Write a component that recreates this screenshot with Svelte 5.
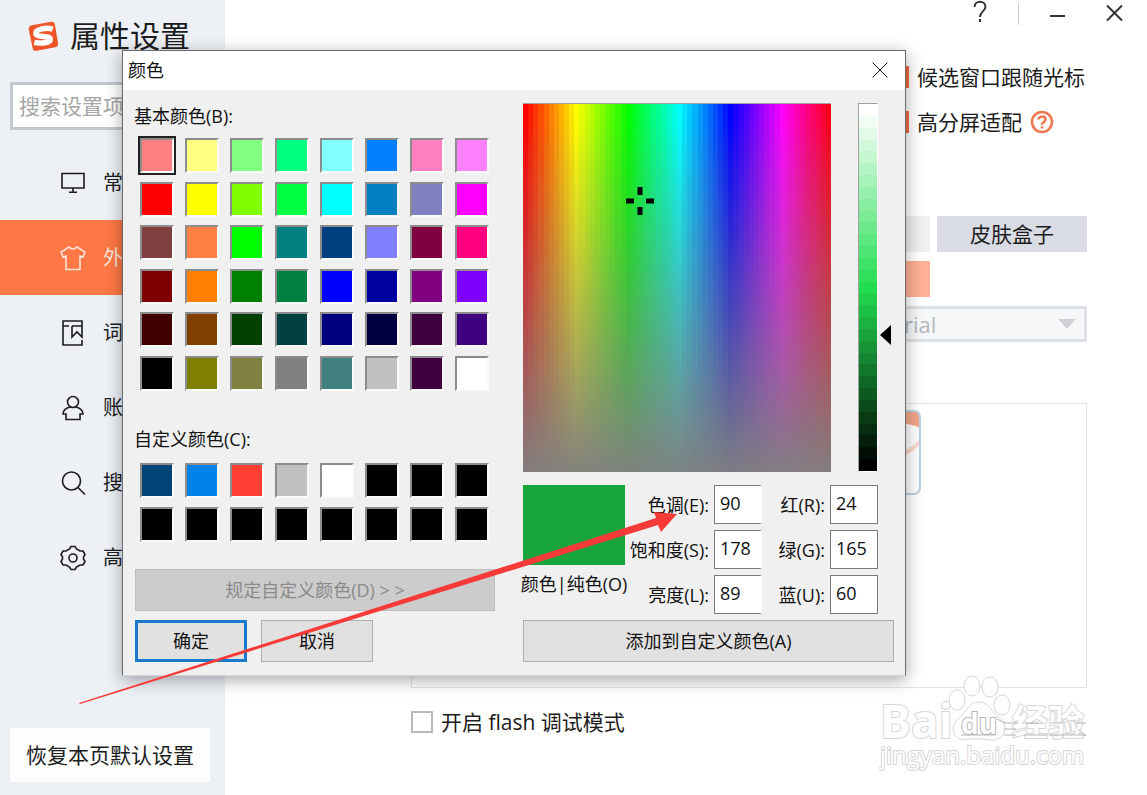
<script lang="ts">
	const navItems = ['常', '外', '词', '账', '搜', '高']
	const icons = ['screen', 'shirt', 'book', 'user', 'search', 'gear']
	let active = $state(1)

	const basicColors = [
		'#ff8080', '#ffff80', '#80ff80', '#00ff80', '#80ffff', '#0080ff', '#ff80c0', '#ff80ff',
		'#ff0000', '#ffff00', '#80ff00', '#00ff40', '#00ffff', '#0080c0', '#8080c0', '#ff00ff',
		'#804040', '#ff8040', '#00ff00', '#008080', '#004080', '#8080ff', '#800040', '#ff0080',
		'#800000', '#ff8000', '#008000', '#008040', '#0000ff', '#0000a0', '#800080', '#8000ff',
		'#400000', '#804000', '#004000', '#004040', '#000080', '#000040', '#400040', '#400080',
		'#000000', '#808000', '#808040', '#808080', '#408080', '#c0c0c0', '#400040', '#ffffff'
	]
	const customColors = [
		'#004478', '#0083e8', '#ff3e33', '#c0c0c0', '#ffffff', '#000000', '#000000', '#000000',
		'#000000', '#000000', '#000000', '#000000', '#000000', '#000000', '#000000', '#000000'
	]
	let selected = $state(0)

	let values = $state({ hue: '90', sat: '178', lum: '89', red: '24', green: '165', blue: '60' })
	const fields = [
		{ key: 'hue', label: '色调(E):' },
		{ key: 'red', label: '红(R):' },
		{ key: 'sat', label: '饱和度(S):' },
		{ key: 'green', label: '绿(G):' },
		{ key: 'lum', label: '亮度(L):' },
		{ key: 'blue', label: '蓝(U):' }
	] as const

	let followCursor = $state(true)
	let highDpi = $state(true)
	let flashDebug = $state(false)

	// Gradient made of flat bands, like the native color dialog
	function bands(direction: string, count: number, color: (t: number) => string): string {
		const stops = []
		for (let i = 0; i < count; i++) {
			const from = (i / count) * 100
			const to = ((i + 1) / count) * 100
			stops.push(`${color(i / (count - 1))} ${from}% ${to}%`)
		}
		return `linear-gradient(${direction}, ${stops.join(', ')})`
	}

	const hueBands = bands('to right', 60, (t) => `hsl(${t * 354}, 100%, 50%)`)
	const grayBands = bands('to bottom', 62, (t) => `rgba(128, 128, 128, ${t * 0.97})`)
	const lumBands = bands('to bottom', 31, (t) => `hsl(135, 74%, ${(1 - t) * 100}%)`)
</script>

{#snippet swatch(color: string, label: string, isSelected: boolean, pick: () => void)}
	<button
		type="button"
		class="swatch"
		class:selected={isSelected}
		style="background-color: {color}"
		aria-label={label}
		onclick={pick}
	></button>
{/snippet}

<div class="page">
	<aside class="sidebar">
		<header class="brand">
			<svg class="logo" viewBox="0 0 32 32" aria-hidden="true">
				<path d="M4 4.500 L24 .8 Q27 .4 27.700 3.200 L31 23 Q31.500 26.500 28 27.200 L9 30.800 Q5.500 31.300 4.800 28 L.8 9 Q.3 5.400 4 4.500Z" fill="#ee5628" />
				<path d="M25.500 8.500 C20 6.500 7.500 8 8 13 C8.500 17.500 23 14.500 23 18.800 C23 22.800 13 23.500 6.500 22" fill="none" stroke="#fff" stroke-width="5.600" />
			</svg>
			<h1>属性设置</h1>
		</header>
		<input class="search" type="text" placeholder="搜索设置项" aria-label="搜索设置项" />
		<nav>
			{#each navItems as item, index}
				<button type="button" class="nav-item" class:active={active === index} onclick={() => (active = index)}>
					<svg viewBox="0 0 26 26" fill="none" stroke="currentColor" stroke-width="1.600" aria-hidden="true">
						{#if icons[index] === 'screen'}
							<path d="M2 3.500H24V18H2ZM13 18V22M9 22.200H17" />
						{:else if icons[index] === 'shirt'}
							<path d="M9 2 L1 7 L3 12 L6 11 V24.500 H20 V11 L23 12 L25 7 L17 2 Q13 6 9 2Z" />
						{:else if icons[index] === 'book'}
							<path d="M22 6V1H3V25H22V20M3 6H9M12 6H22V17L17 12L12 17V6" />
						{:else if icons[index] === 'user'}
							<circle cx="13" cy="7" r="5.500" />
							<path d="M10 12 Q3 14 3 19 H6 V24.500 H20 V19 H23 Q23 14 16 12" />
						{:else if icons[index] === 'search'}
							<circle cx="11.500" cy="11" r="9" />
							<path d="M18 17.500 L25 24.500" />
						{:else}
							<path d="M11 1.500 H15 L16.500 4 L20 6 L23 6 L25 9.500 L23.500 12 V14 L25 16.500 L23 20 L20 20 L16.500 22 L15 24.500 H11 L9.500 22 L6 20 L3 20 L1 16.500 L2.500 14 V12 L1 9.500 L3 6 L6 6 L9.500 4Z" />
							<circle cx="13" cy="13" r="4" />
						{/if}
					</svg>
					<span>{item}</span>
				</button>
			{/each}
		</nav>
		<button type="button" class="restore">恢复本页默认设置</button>
	</aside>

	<main>
		<div class="window-bar">
			<button type="button" aria-label="帮助">
				<svg viewBox="0 0 20 24"><path d="M4.500 7 C4.500 0 15.500 0 15.500 7 C15.500 11 10 11.500 10 17" /><path d="M10 19V22" /></svg>
			</button>
			<span class="divider"></span>
			<button type="button" aria-label="最小化">
				<svg viewBox="0 0 20 24"><path d="M3 16H18" /></svg>
			</button>
			<button type="button" aria-label="关闭">
				<svg viewBox="0 0 20 24"><path d="M3 5.500L18 20.500M18 5.500L3 20.500" /></svg>
			</button>
		</div>

		<div class="content">
			<div class="options">
				<label class="check">
					<input type="checkbox" bind:checked={followCursor} />
					<span>候选窗口跟随光标</span>
				</label>
				<label class="check">
					<input type="checkbox" bind:checked={highDpi} />
					<span>高分屏适配</span>
					<svg class="hint" viewBox="0 0 24 24" fill="none" stroke="#f07850" aria-hidden="true">
						<circle cx="12" cy="12" r="10" stroke-width="2.600" />
						<path d="M8.500 9.500 C8.500 5.500 15.500 5.500 15.500 9.500 C15.500 12 12 12 12 14.800M12 16.200V18.600" stroke-width="2.600" />
					</svg>
				</label>
			</div>

			<div class="skin-buttons">
				<button type="button" class="plain" aria-label="更换皮肤"></button>
				<button type="button">皮肤盒子</button>
			</div>
			<button type="button" class="font-color" aria-label="字体颜色"></button>
			<div class="select-wrap">
				<select aria-label="字体" disabled>
					<option>Arial</option>
				</select>
				<svg viewBox="0 0 18 10" aria-hidden="true"><path d="M0 0H18L9 10Z" fill="#cfd2d4" /></svg>
			</div>

			<div class="preview-panel">
				<svg class="thumb" viewBox="0 0 150 85" aria-hidden="true">
					<path d="M120 1H144Q149 1 149 6V18Q138 12 120 14Z" fill="#f5a78c" />
					<path d="M120 44Q138 42 149 29V35Q138 46 120 50Z" fill="#fbd9cd" />
					<rect x="1" y="1" width="148" height="83" rx="6" fill="none" stroke="#bdd1e3" stroke-width="2" />
				</svg>
			</div>

			<div class="footer">
				<label class="check">
					<input type="checkbox" bind:checked={flashDebug} />
					<span>开启 flash 调试模式</span>
				</label>
			</div>
		</div>
	</main>

	<svg class="watermark" viewBox="0 0 210 106" aria-label="Baidu 经验">
		<g fill="#fff" stroke="#d6d6d6" stroke-width="2">
			<text x="1" y="64" class="mark-big">Bai</text>
			<g stroke-width="1">
				<ellipse cx="78" cy="26" rx="8" ry="10" />
				<ellipse cx="93" cy="12" rx="8" ry="10" />
				<ellipse cx="111" cy="13" rx="8" ry="10" />
				<ellipse cx="123" cy="31" rx="8" ry="10" />
				<path d="M100 28 C110 28 112 38 121 44 C131 52 125 67 112 66 Q100 64 90 65 C75 69 70 54 78 46 C88 38 89 28 100 28Z" />
			</g>
			<text x="133" y="62" class="mark-cn">经验</text>
			<text x="82" y="60" class="mark-du" stroke="#b4b4b4">du</text>
			<text x="1" y="90" class="mark-url">jingyan.baidu.com</text>
		</g>
		<path d="M82 61H116M118 45L126 49M125 49H139M125 55H137M125 61H137M147 49H160M145 61H168M172 49H184M196 49H207M170 61H207M199 55L207 62" stroke="#b4b4b4" fill="none" />
	</svg>

	<div class="dialog" role="dialog" aria-labelledby="dialog-title">
		<div class="title-bar">
			<h2 id="dialog-title">颜色</h2>
			<button type="button" aria-label="关闭">
				<svg viewBox="0 0 16 16"><path d="M.5 .5L15.500 15.500M15.500 .5L.5 15.500" /></svg>
			</button>
		</div>
		<div class="dialog-body">
			<section class="palette">
				<h3>基本颜色(B):</h3>
				<div class="swatches basic">
					{#each basicColors as color, index}
						{@render swatch(color, `基本颜色 ${index + 1}`, selected === index, () => (selected = index))}
					{/each}
				</div>
				<h3 class="custom-title">自定义颜色(C):</h3>
				<div class="swatches">
					{#each customColors as color, index}
						{@render swatch(color, `自定义颜色 ${index + 1}`, selected === index + 48, () => (selected = index + 48))}
					{/each}
				</div>
				<button type="button" class="btn define" disabled>规定自定义颜色(D) &gt; &gt;</button>
				<div class="actions">
					<button type="button" class="btn primary">确定</button>
					<button type="button" class="btn">取消</button>
				</div>
			</section>

			<section class="mixer">
				<div class="pickers">
					<div class="spectrum" style="background-image: {grayBands}, {hueBands}">
						<svg class="crosshair" viewBox="0 0 28 28" aria-hidden="true">
							<path d="M14 0V8M14 20V28M0 14H8M20 14H28" stroke="#000" stroke-width="5" />
						</svg>
					</div>
					<div class="luminance" style="background-image: {lumBands}">
						<svg class="pointer" viewBox="0 0 11 20" aria-hidden="true"><path d="M0 10L11 0V20Z" /></svg>
					</div>
				</div>
				<div class="fields">
					<div class="solid">
						<div class="solid-color"></div>
						<span>颜色|纯色(O)</span>
					</div>
					{#each fields as field, index}
						<label for={field.key}>{field.label}</label>
						<input id={field.key} type="text" class:spin={index % 2 === 0} bind:value={values[field.key]} />
					{/each}
				</div>
				<button type="button" class="btn add">添加到自定义颜色(A)</button>
			</section>
		</div>
	</div>

	<svg class="arrow" viewBox="0 0 600 192" aria-hidden="true">
		<path d="M0 190L577 5L575 -1L598 1L582 19L579 12L1 191Z" fill="#f63a38" />
	</svg>
</div>

<style>
	:global(body) {
		margin: 0;
		background: #fff;
	}
	.page {
		position: relative;
		display: flex;
		min-height: 100vh;
		overflow: hidden;
		background: #fff;
		color: #1c1c1c;
		font-family: 'Open Sans', 'Noto Sans CJK SC', sans-serif;
		font-size: 21px;
		line-height: 22px;
	}
	.page * {
		box-sizing: border-box;
	}
	button,
	input,
	select {
		margin: 0;
		padding: 0;
		border: 0;
		border-radius: 0;
		background: none;
		color: inherit;
		font: inherit;
	}
	h1,
	h2,
	h3 {
		margin: 0;
		font-weight: 400;
	}
	.sidebar {
		display: flex;
		flex-direction: column;
		flex: none;
		width: 225px;
		background: #edf1f6;
	}
	.brand {
		display: flex;
		align-items: center;
		gap: 11px;
		height: 72px;
		padding-left: 28px;
	}
	.logo {
		width: 31px;
		height: 31px;
	}
	h1 {
		font-size: 30px;
		line-height: 36px;
	}
	.search {
		height: 48px;
		margin: 10px 10px 15px;
		padding: 0 6px;
		border: 3px solid #c3c8ce;
		background: #fff;
	}
	.search::placeholder {
		color: #a5a5a5;
	}
	.nav-item {
		display: flex;
		align-items: center;
		gap: 17px;
		width: 100%;
		height: 75px;
		padding-left: 60px;
		font-size: 20px;
	}
	.nav-item svg {
		width: 26px;
		height: 26px;
	}
	.nav-item.active {
		background: #ff7846;
		color: #ffe4d8;
	}
	.restore {
		height: 54px;
		margin: auto 15px 13px 10px;
		background: #fdfdfd;
	}
	main {
		flex: 1;
		padding-bottom: 24px;
	}
	.window-bar {
		display: flex;
		justify-content: flex-end;
		height: 28px;
		padding-right: 23px;
	}
	.window-bar svg {
		display: block;
		width: 20px;
		height: 24px;
		fill: none;
		stroke: #333;
		stroke-width: 2;
	}
	.window-bar button {
		height: 24px;
		margin-left: 37px;
	}
	.window-bar .divider {
		width: 1px;
		height: 22px;
		margin: 3px -9px 0 28px;
		background: #ccc;
	}
	.content {
		display: flex;
		flex-direction: column;
		align-items: flex-end;
		padding: 38px 60px 0 186px;
	}
	.options {
		display: flex;
		flex-direction: column;
		gap: 23px;
		width: 200px;
	}
	.check {
		display: flex;
		align-items: center;
		gap: 8px;
		white-space: nowrap;
	}
	.check input {
		appearance: none;
		flex: none;
		width: 22px;
		height: 22px;
		border: 2px solid #b5bac0;
		background: #fff;
	}
	.check input:checked {
		border-color: #f26b3f;
		background: #f26b3f;
	}
	.hint {
		width: 24px;
		height: 24px;
		margin: -1px 0;
	}
	.skin-buttons {
		display: flex;
		gap: 7px;
		margin-top: 83px;
	}
	.skin-buttons button {
		width: 150px;
		height: 36px;
		background: #d9dce4;
	}
	.skin-buttons .plain {
		background: #efefef;
	}
	.font-color {
		width: 150px;
		height: 36px;
		margin: 9px 157px 9px 0;
		background: #ffb096;
	}
	.select-wrap {
		position: relative;
		width: 216px;
	}
	.select-wrap svg {
		position: absolute;
		top: 13px;
		right: 11px;
		width: 18px;
		height: 10px;
	}
	select {
		appearance: none;
		display: block;
		width: 100%;
		height: 36px;
		padding-left: 16px;
		border: 3px solid #dfe2e4;
		background: #f5f7f9;
		color: #b4b8bb;
		font-size: 22px;
		opacity: 1;
	}
	.preview-panel {
		align-self: stretch;
		min-height: 285px;
		margin: 61px 0 23px;
		padding: 6px 0 0 359px;
		border: 1px solid #e1e4e7;
	}
	.thumb {
		width: 150px;
		height: 85px;
	}
	.footer {
		align-self: stretch;
	}
	.watermark {
		position: absolute;
		right: 58px;
		bottom: 15px;
		width: 210px;
		height: 106px;
	}
	.watermark text {
		font-family: 'Open Sans', 'Noto Sans CJK SC', sans-serif;
		font-weight: 700;
		paint-order: stroke;
	}
	.mark-big {
		font-size: 46px;
	}
	.mark-cn {
		font-size: 36px;
	}
	.mark-du {
		font-size: 28px;
	}
	.watermark .mark-url {
		font-size: 24px;
		font-weight: 400;
	}
	.dialog {
		position: absolute;
		top: 50px;
		left: 122px;
		width: 784px;
		border: 1px solid #6a6a6a;
		border-bottom-color: #d4d4d4;
		background: #f0f0f0;
		box-shadow: 0 4px 16px rgba(0, 0, 0, 0.35);
		color: #111;
		font-size: 18px;
		line-height: 28px;
	}
	.title-bar {
		display: flex;
		align-items: center;
		justify-content: space-between;
		height: 39px;
		padding: 0 17px 2px 5px;
		background: #fff;
	}
	h2,
	h3 {
		font-size: 18px;
	}
	.title-bar svg {
		display: block;
		width: 16px;
		height: 16px;
		stroke: #111;
	}
	.dialog-body {
		display: grid;
		grid-template-columns: 360px 371px;
		gap: 28px;
		padding: 13px 11px 13px 12px;
	}
	.palette {
		display: flex;
		flex-direction: column;
	}
	.swatches {
		display: grid;
		grid-template-columns: repeat(8, 34px);
		gap: 9px 11px;
		margin-top: 10px;
		padding-left: 5px;
	}
	.swatches.basic {
		align-content: space-between;
		row-gap: 0;
		height: 253px;
		margin-top: 8px;
	}
	.swatch {
		height: 35px;
		border: 2px solid;
		border-color: #8c8c8c #fafafa #fafafa #8c8c8c;
		background-clip: padding-box;
	}
	.swatch.selected {
		outline: 2px solid #222;
	}
	h3 {
		margin-left: -1px;
		line-height: 27px;
	}
	.custom-title {
		margin-top: 35px;
	}
	.btn {
		height: 42px;
		border: 1px solid #adadad;
		background: #e1e1e1;
	}
	.btn.define {
		margin-top: 27px;
		border-color: #bfbfbf;
		background: #ccc;
		color: #8a8a8a;
	}
	.actions {
		display: flex;
		gap: 14px;
		margin-top: 9px;
	}
	.actions .btn {
		width: 112px;
	}
	.btn.primary {
		border: 3px solid #1979ca;
	}
	.mixer {
		display: flex;
		flex-direction: column;
	}
	.pickers {
		display: flex;
		gap: 27px;
	}
	.spectrum {
		position: relative;
		width: 308px;
		height: 369px;
		border-top: 1px solid #a0a0a0;
	}
	.crosshair {
		position: absolute;
		top: 83px;
		left: 103px;
		width: 28px;
		height: 28px;
	}
	.luminance {
		position: relative;
		width: 20px;
		border: 1px solid;
		border-color: #a0a0a0 #fff #fff #a0a0a0;
	}
	.pointer {
		position: absolute;
		top: 221px;
		left: 21px;
		width: 11px;
		height: 20px;
	}
	.fields {
		display: grid;
		grid-template-columns: 102px 81px 48px 60px 48px;
		grid-template-rows: repeat(3, 39px);
		gap: 6px 4px;
		margin: 13px 0 6px;
		white-space: nowrap;
	}
	.fields label {
		justify-self: end;
		align-self: center;
		padding-right: 1px;
	}
	.fields input {
		width: 100%;
		padding: 0 0 3px 5px;
		border: 1px solid #7a7a7a;
		background: #fff;
	}
	.fields input.spin {
		border-right: 2px solid #fff;
	}
	.solid {
		display: flex;
		flex-direction: column;
		align-items: center;
		grid-row: span 3;
		gap: 5px;
	}
	.solid-color {
		width: 102px;
		height: 80px;
		background: #18a53c;
	}
	.arrow {
		position: absolute;
		top: 513px;
		left: 79px;
		width: 600px;
		height: 192px;
		overflow: visible;
		pointer-events: none;
	}
</style>
